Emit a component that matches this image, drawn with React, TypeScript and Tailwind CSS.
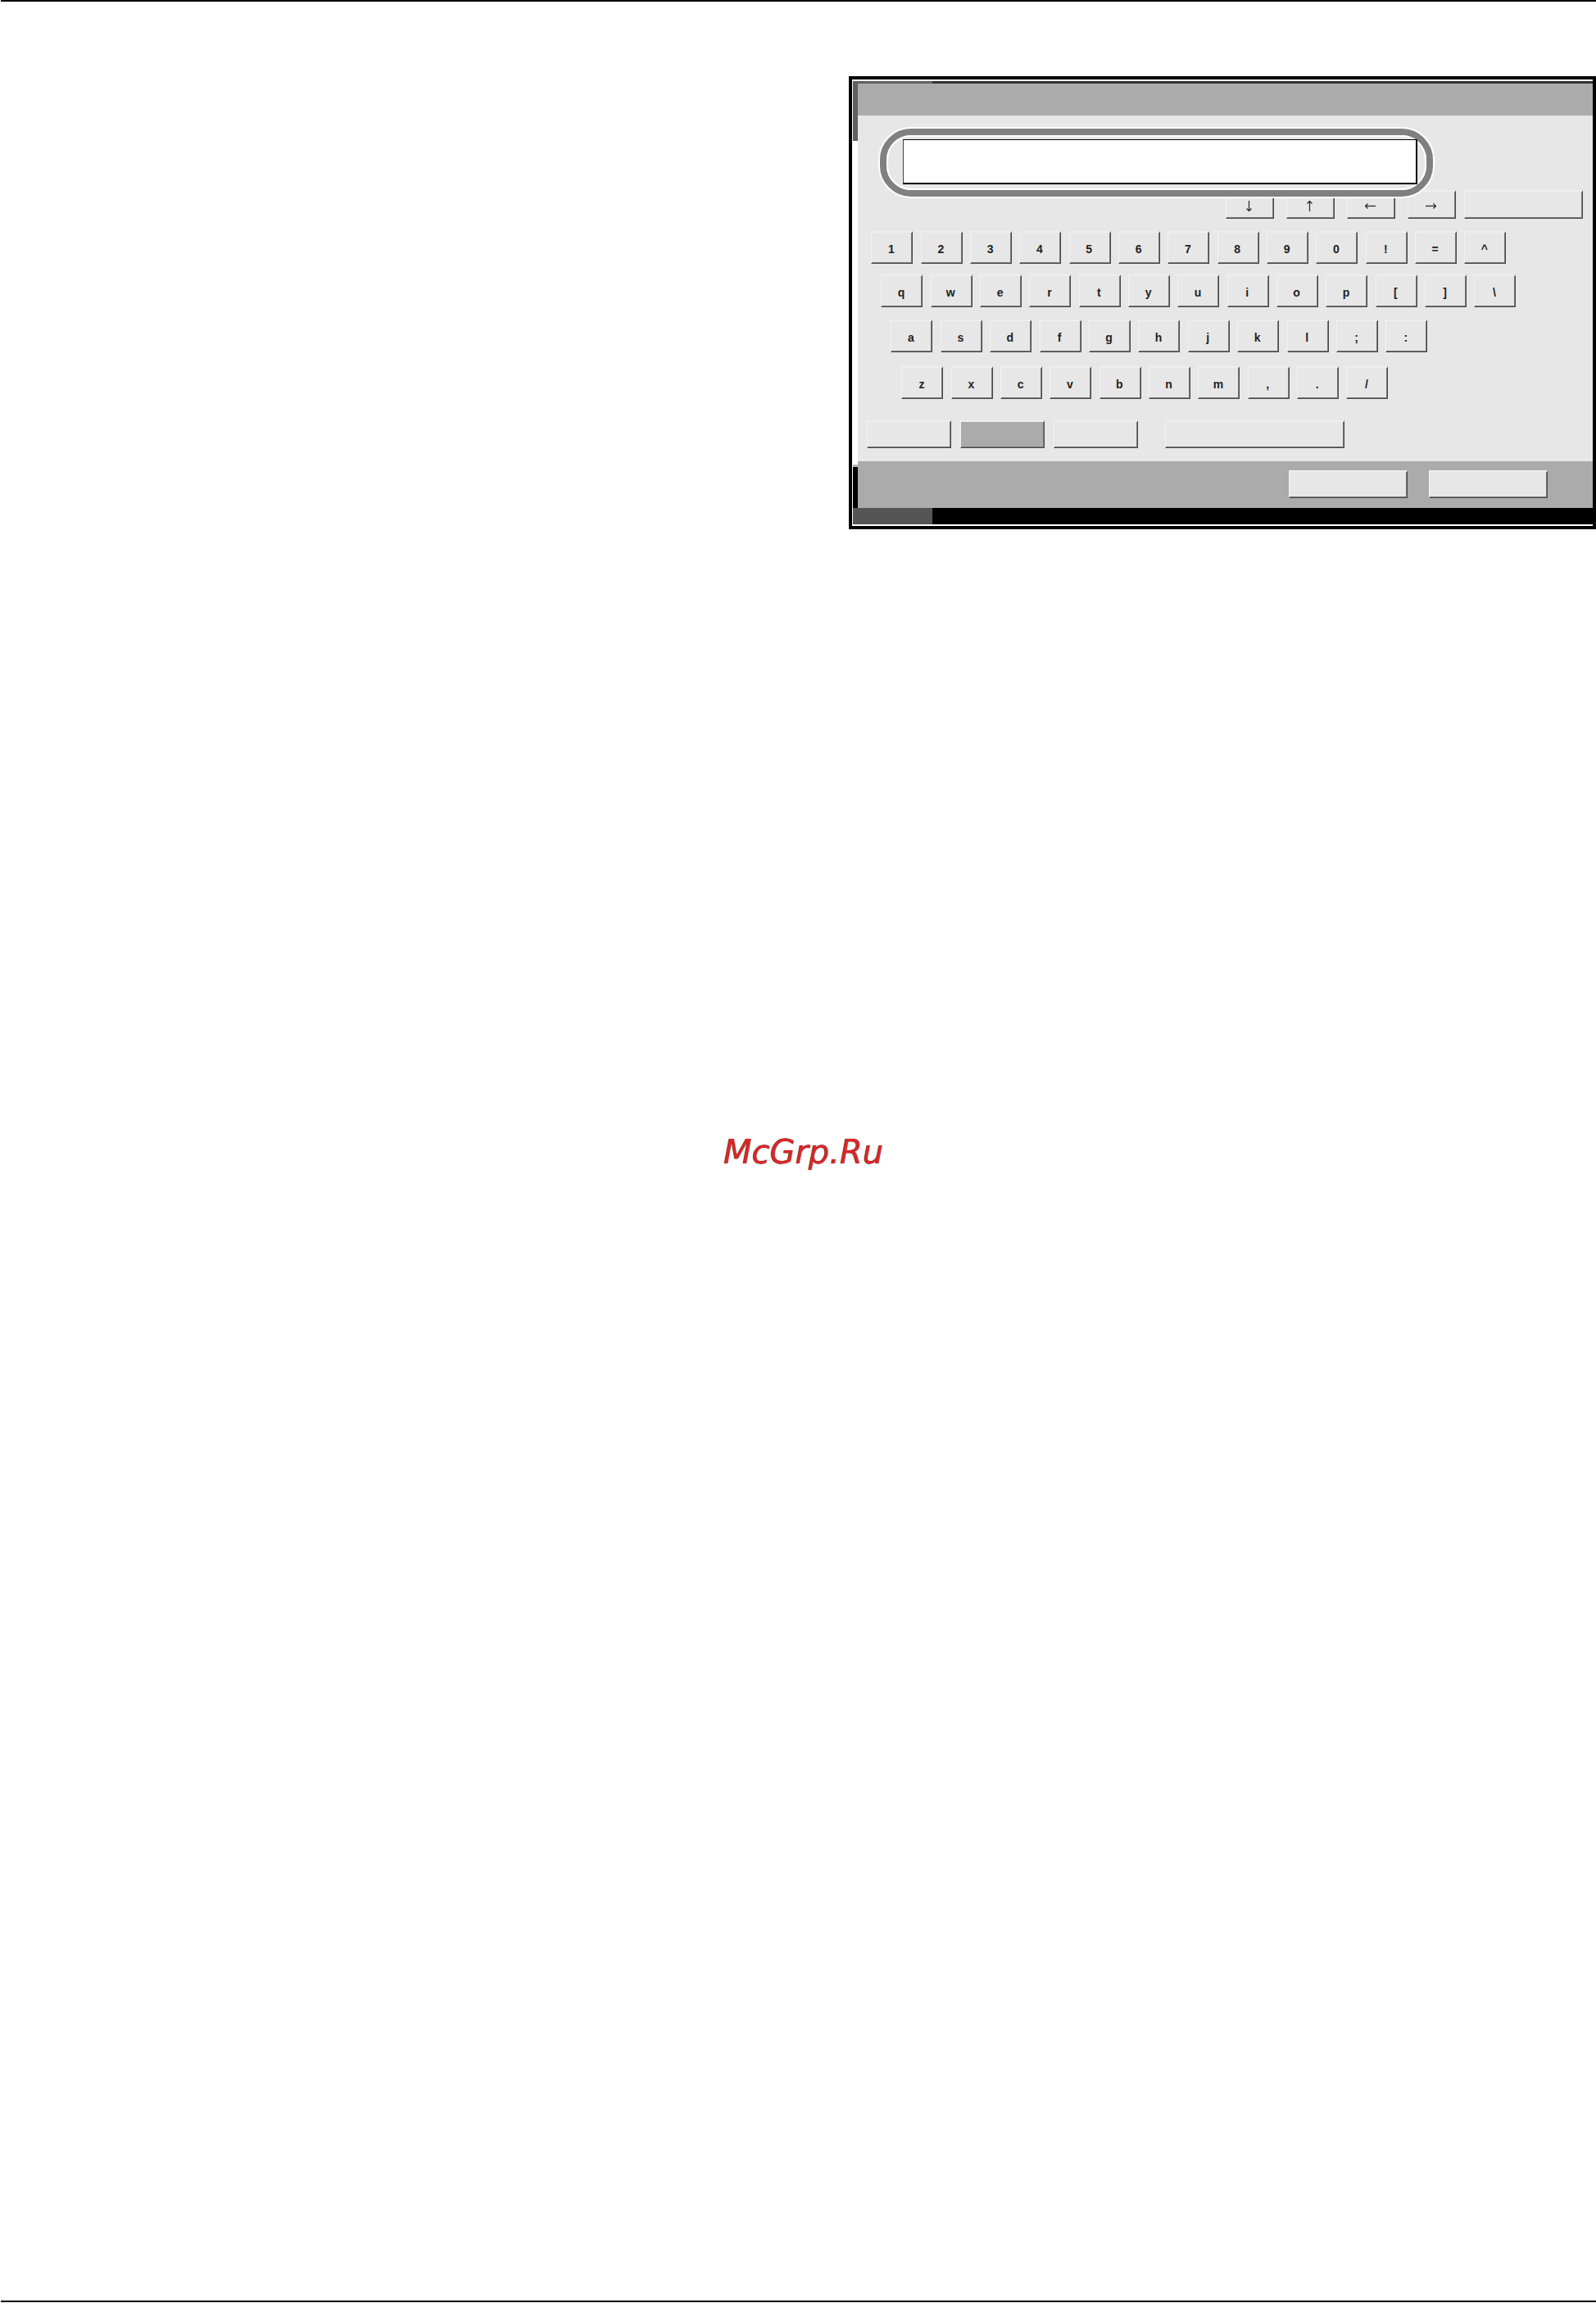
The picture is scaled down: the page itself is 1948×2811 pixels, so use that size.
import clsx from "clsx";
import { useState } from "react";

const numberRow = ["1", "2", "3", "4", "5", "6", "7", "8", "9", "0", "!", "=", "^"];
const topRow = ["q", "w", "e", "r", "t", "y", "u", "i", "o", "p", "[", "]", "\\"];
const homeRow = ["a", "s", "d", "f", "g", "h", "j", "k", "l", ";", ":"];
const bottomRow = ["z", "x", "c", "v", "b", "n", "m", ",", ".", "/"];

const arrows = [
  { name: "Down", rotate: "rotate-90" },
  { name: "Up", rotate: "-rotate-90" },
  { name: "Left", rotate: "rotate-180" },
  { name: "Right", rotate: "rotate-0" },
];

const bevel =
  "shrink-0 border-t-2 border-l border-r border-b border-t-[#eeeeee] border-l-[#f2f2f2] border-r-[#484848] border-b-[#484848] shadow-[inset_-1px_-1px_#777777]";

type KeyRowProps = {
  keys: string[];
  className: string;
  onPress: (key: string) => void;
};

const KeyRow = ({ keys, className, onPress }: KeyRowProps) => {
  return (
    <div className={clsx("flex justify-between", className)}>
      {keys.map((key) => (
        <button
          key={key}
          type="button"
          onClick={() => onPress(key)}
          className={clsx(bevel, "h-10 w-[51px] pt-0.5 pr-0.5 text-sm leading-5 font-bold text-[#222222]")}
        >
          {key}
        </button>
      ))}
    </div>
  );
};

const ArrowIcon = ({ rotate }: { rotate: string }) => (
  <svg
    viewBox="0 0 13 13"
    className={clsx("h-[13px] w-[13px]", rotate)}
    fill="none"
    stroke="#222222"
    strokeWidth="1.2"
    aria-hidden="true"
  >
    <path d="M0 6.5H12.5" />
    <path d="M9.5 3.5L12.5 6.5L9.5 9.5" />
  </svg>
);

const KeyboardPanel = () => {
  const [text, setText] = useState("");
  const press = (key: string) => setText(text + key);

  return (
    <section className="border-4 border-black bg-white py-0.5 pl-px">
      <div className="flex h-[3px]">
        <div className="w-[97px] bg-[#606060]" />
        <div className="flex-1 bg-[#2e332f]" />
      </div>
      <div className="flex">
        {/* side strip */}
        <div className="flex w-1.5 flex-col">
          <div className="h-[70px] bg-[#606060]" />
          <div className="flex-1" />
          <div className="h-[3px] bg-[#b8b8b8]" />
          <div className="h-[50px] bg-black" />
        </div>
        <div className="flex-1 bg-[#e7e7e7]">
          <div className="h-[39px] bg-[#ababab]" />

          <div className="relative z-10 mt-[14px] ml-[25px] h-[87px] w-[679px] rounded-[40px] border-2 border-white">
            <div className="h-full rounded-[38px] border-8 border-[#808080]">
              <div className="h-full rounded-[30px] border-2 border-white" />
            </div>
            <input
              type="text"
              aria-label="Entered text"
              value={text}
              onChange={(e) => setText(e.target.value)}
              className="absolute top-[13px] left-7 h-[55px] w-[628px] border-t border-r-2 border-b-2 border-l border-black border-l-[#444444] bg-white px-3 text-2xl outline-none"
            />
          </div>

          {/* cursor keys, partly behind the ring */}
          <div className="-mt-[10px] flex justify-end gap-[10px] pr-3">
            <div className="flex gap-[15px]">
              {arrows.map(({ name, rotate }) => (
                <button
                  key={name}
                  type="button"
                  aria-label={name}
                  className={clsx(bevel, "flex h-[35px] w-[59px] items-center justify-center pt-0.5 pr-0.5")}
                >
                  <ArrowIcon rotate={rotate} />
                </button>
              ))}
            </div>
            <button
              type="button"
              aria-label="Backspace"
              onClick={() => setText(text.slice(0, -1))}
              className={clsx(bevel, "h-[35px] w-[145px]")}
            />
          </div>

          <KeyRow keys={numberRow} onPress={press} className="mt-[15px] ml-4 w-[775px]" />
          <KeyRow keys={topRow} onPress={press} className="mt-[13px] ml-7 w-[775px]" />
          <KeyRow keys={homeRow} onPress={press} className="mt-[15px] ml-10 w-[655px]" />
          <KeyRow keys={bottomRow} onPress={press} className="mt-[17px] ml-[53px] w-[594px]" />

          <div className="mt-[26px] flex gap-[11px] pb-4 pl-[11px]">
            <button type="button" aria-label="Upper case" className={clsx(bevel, "h-[34px] w-[103px]")} />
            <button type="button" aria-label="Lower case" className={clsx(bevel, "h-[34px] w-[103px] bg-[#ababab]")} />
            <button type="button" aria-label="Symbols" className={clsx(bevel, "h-[34px] w-[103px]")} />
            <button
              type="button"
              aria-label="Space"
              onClick={() => press(" ")}
              className={clsx(bevel, "ml-[22px] h-[34px] w-[219px]")}
            />
          </div>

          <div className="flex h-[57px] justify-end gap-[26px] bg-[#ababab] pt-[11px] pr-[55px]">
            <button type="button" aria-label="Cancel" className={clsx(bevel, "h-[34px] w-[145px] bg-[#e7e7e7]")} />
            <button type="button" aria-label="OK" className={clsx(bevel, "h-[34px] w-[145px] bg-[#e7e7e7]")} />
          </div>
        </div>
      </div>
      <div className="flex h-5">
        <div className="w-[97px] bg-[#555555]" />
        <div className="flex-1 bg-black" />
      </div>
    </section>
  );
};

const App = () => {
  return (
    <div className="min-h-screen bg-white pb-px pl-px font-['Liberation_Sans',Arial,sans-serif]">
      <main className="flex min-h-[calc(100vh-1px)] flex-col border-y-2 border-black">
        <div className="mt-[91px] grid grid-cols-[259fr_228fr]">
          <div />
          <KeyboardPanel />
        </div>
        <p className="mt-[736px] pl-3 text-center font-['DejaVu_Sans',Verdana,sans-serif] text-[40px] leading-12 text-[#dc2626] italic text-shadow-[0_0_1px_#000000]">
          McGrp.Ru
        </p>
      </main>
    </div>
  );
};

export default App;
